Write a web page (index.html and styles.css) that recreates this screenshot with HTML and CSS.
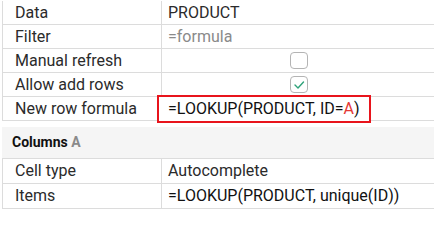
FILE: index.html
```html
<!DOCTYPE html>
<html>
<head>
<meta charset="utf-8">
<link rel="stylesheet" href="styles.css">
</head>
<body>
<div class="grid">
  <div class="row"><div class="label">Data</div><div class="value">PRODUCT</div></div>
  <div class="row"><div class="label">Filter</div><div class="value placeholder">=formula</div></div>
  <div class="row"><div class="label">Manual refresh</div><div class="value center"><span class="checkbox"></span></div></div>
  <div class="row"><div class="label">Allow add rows</div><div class="value center"><span class="checkbox"><svg viewBox="0 0 18 17" width="18" height="17"><path d="M5 9 L8 12 L13.5 6" fill="none" stroke="#2fa37a" stroke-width="1.4" stroke-linecap="round" stroke-linejoin="round"/></svg></span></div></div>
  <div class="row"><div class="label">New row formula</div><div class="value editing"><div class="editor">=LOOKUP(PRODUCT, ID=<span class="ref">A</span>)</div></div></div>
</div>
<div class="section">Columns <span class="col">A</span></div>
<div class="grid lower">
  <div class="row"><div class="label">Cell type</div><div class="value">Autocomplete</div></div>
  <div class="row"><div class="label">Items</div><div class="value formula">=LOOKUP(PRODUCT, unique(ID))</div></div>
</div>
</body>
</html>
```

FILE: styles.css
```css
html, body {
  margin: 0;
  padding: 0;
  background: #fff;
}
body {
  padding-top: 1px;
  font-family: Roboto, "Noto Sans", sans-serif;
  font-size: 16px;
  color: #2b2b2b;
  overflow: hidden;
}
.grid {
  margin-left: 2px;
  border-left: 1px solid #dcdcdc;
}
.row {
  display: grid;
  grid-template-columns: 159px 1fr;
  height: 23px;
  border-bottom: 1px solid #dcdcdc;
}
.lower .row {
  height: 24px;
}
.label {
  padding-left: 12px;
  line-height: 23px;
  border-right: 1px solid #dcdcdc;
  white-space: nowrap;
}
.lower .label, .lower .value {
  line-height: 24px;
}
.value {
  padding-left: 6px;
  line-height: 23px;
  white-space: nowrap;
}
.placeholder {
  color: #8a8a8a;
}
.center {
  display: flex;
  align-items: center;
  justify-content: center;
  padding-left: 2px;
}
.checkbox {
  display: block;
  width: 18px;
  height: 17px;
  box-sizing: border-box;
  border: 1px solid #b4b4b4;
  border-radius: 4px;
  position: relative;
}
.checkbox svg {
  position: absolute;
  left: -1px;
  top: -1px;
}
.editing {
  position: relative;
}
.editor {
  position: absolute;
  left: -5px;
  top: -2px;
  width: 214px;
  height: 28px;
  box-sizing: border-box;
  border: 2px solid #e8141c;
  padding-left: 9px;
  line-height: 24px;
  color: #111;
  background: #fff;
}
.ref {
  color: #e53935;
}
.formula {
  color: #111;
}
.section {
  margin-top: 6px;
  margin-left: 2px;
  height: 31px;
  line-height: 31px;
  background: #f5f5f5;
  border-bottom: 1px solid #dcdcdc;
  padding-left: 10px;
  font-size: 14px;
  font-weight: bold;
  color: #111;
}
.col {
  color: #8a8a8a;
}
```
